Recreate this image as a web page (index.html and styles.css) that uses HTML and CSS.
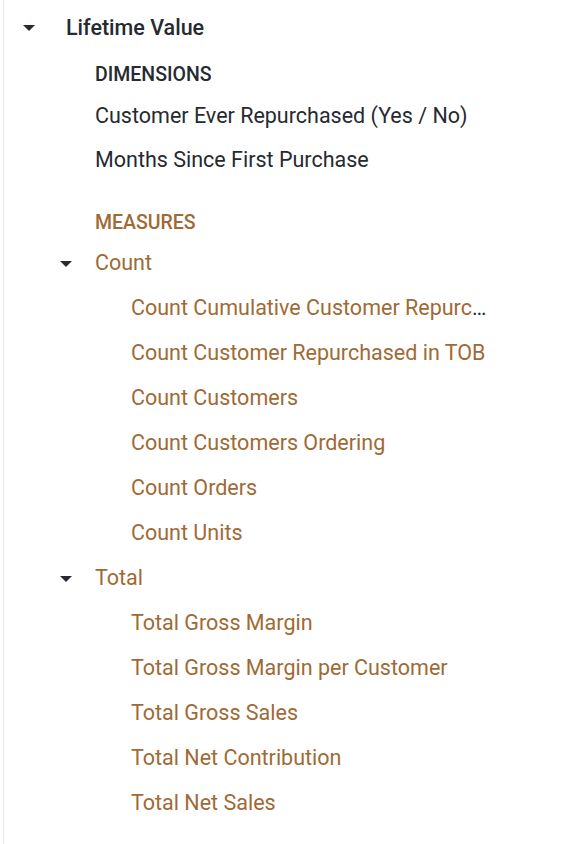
FILE: index.html
```html
<!DOCTYPE html>
<html>
<head>
<meta charset="utf-8">
<link rel="stylesheet" href="styles.css">
</head>
<body>
<div class="panel">
  <div class="group">
    <div class="group-head">
      <span class="caret caret-top"></span>
      <span class="group-title">Lifetime Value</span>
    </div>
    <div class="section-label dim">DIMENSIONS</div>
    <div class="item dim-item">Customer Ever Repurchased (Yes / No)</div>
    <div class="item dim-item">Months Since First Purchase</div>
    <div class="section-label meas">MEASURES</div>
    <div class="sub-head">
      <span class="caret caret-sub"></span>
      <span class="sub-title">Count</span>
    </div>
    <div class="item meas-item trunc" title="Count Cumulative Customer Repurchased"><span class="trunc-text">Count Cumulative Customer Repurchased</span></div>
    <div class="item meas-item">Count Customer Repurchased in TOB</div>
    <div class="item meas-item">Count Customers</div>
    <div class="item meas-item">Count Customers Ordering</div>
    <div class="item meas-item">Count Orders</div>
    <div class="item meas-item">Count Units</div>
    <div class="sub-head">
      <span class="caret caret-sub"></span>
      <span class="sub-title">Total</span>
    </div>
    <div class="item meas-item">Total Gross Margin</div>
    <div class="item meas-item">Total Gross Margin per Customer</div>
    <div class="item meas-item">Total Gross Sales</div>
    <div class="item meas-item">Total Net Contribution</div>
    <div class="item meas-item">Total Net Sales</div>
  </div>
</div>
</body>
</html>
```
FILE: styles.css
```css
html, body {
  margin: 0;
  padding: 0;
  background: #ffffff;
}
body {
  font-family: Roboto, "Liberation Sans", sans-serif;
  color: #262a31;
}
.panel {
  margin-left: 3px;
  border-left: 1px solid #e6e8ea;
  min-height: 844px;
  box-sizing: border-box;
  width: 575px;
}
.group {
  display: flex;
  flex-direction: column;
}
.group-head {
  display: flex;
  align-items: center;
  height: 54px;
  padding-left: 19px;
}
.caret {
  width: 0;
  height: 0;
  border-left: 6px solid transparent;
  border-right: 6px solid transparent;
  border-top: 6px solid #262a31;
  flex: none;
}
.caret-top {
  margin-right: 31px;
  margin-top: 2px;
}
.group-title {
  font-size: 21.5px;
  font-weight: 500;
  color: #262a31;
}
.section-label {
  padding-left: 91px;
  font-size: 19.5px;
  font-weight: 500;
  line-height: 24px;
}
.section-label.dim {
  color: #262a31;
  margin-top: 9px;
  margin-bottom: 7px;
}
.section-label.meas {
  color: #9f6a35;
  margin-top: 29px;
  margin-bottom: 5px;
}
.item {
  font-size: 21.5px;
  line-height: 45px;
  height: 45px;
  white-space: nowrap;
}
.dim-item {
  padding-left: 91px;
  color: #262a31;
  line-height: 44px;
  height: 44px;
}
.sub-head {
  display: flex;
  align-items: center;
  height: 45px;
  padding-left: 56px;
}
.caret-sub {
  margin-right: 23px;
  margin-top: 3px;
}
.sub-title {
  font-size: 21.5px;
  color: #9f6a35;
}
.meas-item {
  padding-left: 127px;
  color: #9f6a35;
}
.item.trunc {
  width: 359px;
  overflow: hidden;
  text-overflow: ellipsis;
  color: #262a31;
  box-sizing: content-box;
}
.trunc-text {
  color: #9f6a35;
}
```
